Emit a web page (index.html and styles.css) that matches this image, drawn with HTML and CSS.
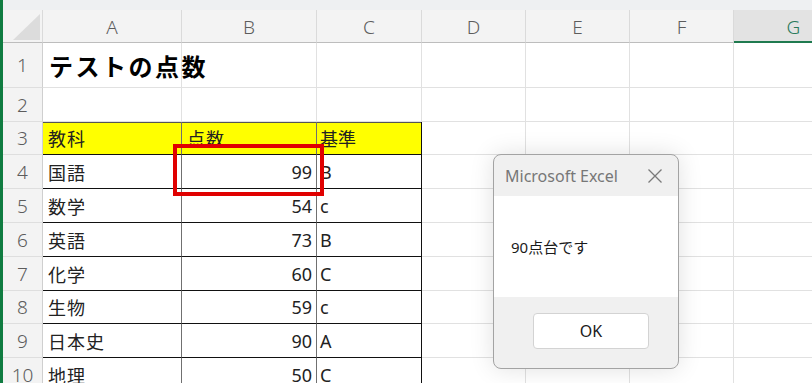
FILE: index.html
```html
<!DOCTYPE html>
<html lang="ja">
<head>
    <meta charset="UTF-8">
    <title>テストの点数 - Excel</title>
    <link rel="stylesheet" href="styles.css">
</head>
<body>
    <div class="app">
        <div class="topbar"></div>

        <div class="sheet">
            <!-- 列見出し -->
            <div class="row head-row">
                <div class="corner"><span class="tri"></span></div>
                <div class="col-head">A</div>
                <div class="col-head">B</div>
                <div class="col-head">C</div>
                <div class="col-head">D</div>
                <div class="col-head">E</div>
                <div class="col-head">F</div>
                <div class="col-head active">G</div>
            </div>

            <div class="row r1">
                <div class="row-head">1</div>
                <div class="cell title">テストの点数</div>
                <div class="cell"></div>
                <div class="cell"></div>
                <div class="cell"></div>
                <div class="cell"></div>
                <div class="cell"></div>
                <div class="cell"></div>
            </div>

            <div class="row r34">
                <div class="row-head">2</div>
                <div class="cell"></div>
                <div class="cell"></div>
                <div class="cell"></div>
                <div class="cell"></div>
                <div class="cell"></div>
                <div class="cell"></div>
                <div class="cell"></div>
            </div>

            <div class="row r33 th">
                <div class="row-head">3</div>
                <div class="cell t yellow">教科</div>
                <div class="cell t yellow">点数</div>
                <div class="cell t yellow last">基準</div>
                <div class="cell"></div>
                <div class="cell"></div>
                <div class="cell"></div>
                <div class="cell"></div>
            </div>

            <div id="rows"></div>
        </div>

        <div class="mark"></div>

        <div class="dialog">
            <div class="dlg-title">
                <span>Microsoft Excel</span>
                <svg class="close" width="16" height="16" viewBox="0 0 16 16">
                    <path d="M1.5 1.5 L14.5 14.5 M14.5 1.5 L1.5 14.5" stroke="#7a7a7a" stroke-width="1.3" fill="none"/>
                </svg>
            </div>
            <div class="dlg-body">90点台です</div>
            <div class="dlg-foot">
                <div class="btn">OK</div>
            </div>
        </div>
    </div>

    <script>
        // 表のデータ
        const scores = [
            ['国語', 99, 'B', 34],
            ['数学', 54, 'c', 34],
            ['英語', 73, 'B', 34],
            ['化学', 60, 'C', 34],
            ['生物', 59, 'c', 33],
            ['日本史', 90, 'A', 34],
            ['地理', 50, 'C', 34]
        ];

        const rows = document.getElementById('rows');
        rows.innerHTML = scores.map((s, i) => `
            <div class="row r${s[3]}">
                <div class="row-head">${i + 4}</div>
                <div class="cell t">${s[0]}</div>
                <div class="cell t num">${s[1]}</div>
                <div class="cell t last">${s[2]}</div>
                <div class="cell"></div>
                <div class="cell"></div>
                <div class="cell"></div>
                <div class="cell"></div>
            </div>
        `).join('');
    </script>
</body>
</html>
```

FILE: styles.css
```css
* {
    margin: 0;
    padding: 0;
    box-sizing: border-box;
}

body {
    font-family: 'Noto Sans', 'Noto Sans CJK JP', sans-serif;
    background: white;
    width: 812px;
    height: 383px;
    overflow: hidden;
}

.app {
    position: relative;
    height: 383px;
    border-left: 3px solid #107c41;
    overflow: hidden;
}

.topbar {
    height: 10px;
    background: #eef0f2;
}

.row {
    display: grid;
    grid-template-columns: 40px 139px 135px 105px 104px 104px 104px 120px;
}

.head-row {
    height: 33px;
    background: #f3f3f3;
}

.r1 { height: 45px; }
.r34 { height: 34px; }
.r33 { height: 33px; }

.corner {
    position: relative;
    border-right: 1px solid #dadada;
    border-bottom: 1px solid #bdbdbd;
}

.corner .tri {
    position: absolute;
    right: 2px;
    bottom: 2px;
    width: 27px;
    height: 26px;
    background: #dcdcdc;
    clip-path: polygon(100% 0, 100% 100%, 0 100%);
}

.col-head {
    display: flex;
    align-items: center;
    justify-content: center;
    padding-top: 2px;
    font-size: 19px;
    font-weight: 300;
    color: #5c5c5c;
    border-right: 1px solid #dadada;
    border-bottom: 1px solid #bdbdbd;
}

.col-head.active {
    background: #e3e3e3;
    color: #2a7a5c;
    border-bottom: 2px solid #1f7a4f;
}

.row-head {
    display: flex;
    align-items: center;
    justify-content: center;
    background: #f3f3f3;
    font-size: 19px;
    font-weight: 300;
    color: #5c5c5c;
    border-right: 1px solid #cfcfcf;
    border-bottom: 1px solid #dedede;
}

.cell {
    display: flex;
    align-items: center;
    padding: 0 4px 0 5px;
    font-family: 'Noto Sans', 'Noto Sans CJK JP', sans-serif;
    font-size: 18px;
    letter-spacing: 1px;
    color: #222;
    border-right: 1px solid #e1e1e1;
    border-bottom: 1px solid #e1e1e1;
    white-space: nowrap;
}

.cell.title {
    padding-left: 6px;
    font-size: 24px;
    font-weight: bold;
    letter-spacing: 2.5px;
    color: #000;
    overflow: visible;
}

.cell.t {
    border-bottom: 1px solid #111;
    border-right: 1px solid #707070;
}

.cell.t.last {
    border-right: 1px solid #111;
    padding-left: 3px;
    letter-spacing: 0;
}

.cell.num {
    justify-content: flex-end;
    letter-spacing: 0;
}

.th .cell.t {
    box-shadow: inset 0 1px 0 #555;
}

.yellow {
    background: #ffff00;
}

/* 赤い枠 */
.mark {
    position: absolute;
    left: 170px;
    top: 144px;
    width: 151px;
    height: 52px;
    border: 4px solid #e00000;
}

/* メッセージボックス */
.dialog {
    position: absolute;
    left: 490px;
    top: 154px;
    width: 186px;
    height: 215px;
    background: #f0f0f0;
    border: 1px solid #a3a3a3;
    border-radius: 8px;
    box-shadow: 0 0 24px rgba(0,0,0,0.12);
    overflow: hidden;
    display: flex;
    flex-direction: column;
}

.dlg-title {
    height: 41px;
    display: flex;
    align-items: center;
    justify-content: space-between;
    padding: 0 15px 0 11px;
    font-size: 16px;
    color: #777;
}

.dlg-body {
    height: 101px;
    background: white;
    display: flex;
    align-items: center;
    padding-left: 17px;
    font-size: 15px;
    color: #1a1a1a;
}

.dlg-foot {
    flex: 1;
    padding: 16px 0 0 39px;
}

.btn {
    width: 116px;
    height: 36px;
    background: white;
    border: 1px solid #d3d3d3;
    border-radius: 4px;
    display: flex;
    align-items: center;
    justify-content: center;
    font-size: 16px;
    color: #1a1a1a;
}
```
